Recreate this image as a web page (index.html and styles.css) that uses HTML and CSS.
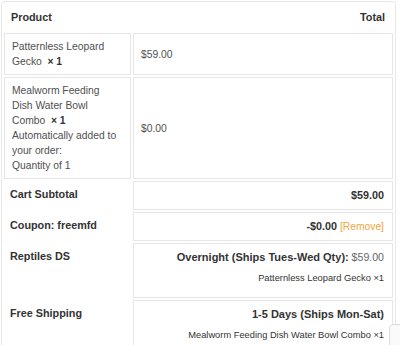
FILE: index.html
```html
<!DOCTYPE html>
<html lang="en">

<head>
    <meta charset="UTF-8">
    <meta name="viewport" content="width=device-width, initial-scale=1.0">
    <link rel="stylesheet" href="styles.css">
</head>

<body>
    <table class="order-review">
        <thead>
            <tr>
                <th class="product-name">Product</th>
                <th class="product-total">Total</th>
            </tr>
        </thead>
        <tbody>
            <tr class="cart-item">
                <td class="product-name">Patternless Leopard Gecko&nbsp;&nbsp;<strong class="qty">&times;&nbsp;1</strong></td>
                <td class="product-price">$59.00</td>
            </tr>
            <tr class="cart-item">
                <td class="product-name">Mealworm Feeding Dish Water Bowl Combo&nbsp;&nbsp;<strong class="qty">&times;&nbsp;1</strong><br>Automatically added to your order:<br>Quantity of 1</td>
                <td class="product-price">$0.00</td>
            </tr>
        </tbody>
        <tfoot>
            <tr>
                <th>Cart Subtotal</th>
                <td class="amount"><strong>$59.00</strong></td>
            </tr>
            <tr>
                <th>Coupon: freemfd</th>
                <td class="amount"><strong>-$0.00</strong> <a class="remove" href="#">[Remove]</a></td>
            </tr>
            <tr class="shipping">
                <th>Reptiles DS</th>
                <td class="amount">
                    <div class="method"><strong>Overnight (Ships Tues-Wed Qty):</strong> <span class="price">$59.00</span></div>
                    <p class="contents">Patternless Leopard Gecko &times;1</p>
                </td>
            </tr>
            <tr class="shipping">
                <th>Free Shipping</th>
                <td class="amount">
                    <div class="method"><strong>1-5 Days (Ships Mon-Sat)</strong></div>
                    <p class="contents">Mealworm Feeding Dish Water Bowl Combo &times;1</p>
                </td>
            </tr>
        </tfoot>
    </table>

    <div class="corner-widget"></div>
</body>

</html>
```

FILE: styles.css
```css
body {
    margin: 0;
    font-family: "Liberation Sans", Arial, sans-serif;
    font-size: 10.3px;
    line-height: 15px;
    color: #4f4f4f;
    background: #fff;
    overflow: hidden;
}

.order-review {
    margin: 1px 0 0 1px;
    width: 395px;
    table-layout: fixed;
    border-collapse: separate;
    border-spacing: 2px;
    border: 1px solid #e8e8e8;
    border-radius: 4px;
}

.order-review th,
.order-review td {
    padding: 5px 7px;
    text-align: left;
    vertical-align: top;
}

.order-review th {
    color: #333;
    font-weight: bold;
    font-size: 10.8px;
}

.order-review thead th {
    padding-top: 6px;
    padding-bottom: 6px;
}

.order-review thead th.product-name {
    width: 113px;
}

.order-review thead th.product-total {
    text-align: right;
    padding-right: 8px;
}

.order-review tbody td {
    border: 1px solid #e6e6e6;
}

.order-review tbody td.product-price {
    vertical-align: middle;
}

.qty {
    color: #333;
}

/*footer rows:*/
.order-review tfoot th {
    padding: 6px 7px 6px 6px;
}

.order-review tfoot td {
    border: 1px solid #e6e6e6;
    text-align: right;
    padding: 6px 8px 6px 7px;
}

.amount strong {
    color: #333;
    font-size: 10.8px;
}

.method strong {
    font-size: 11px;
}

.remove {
    color: #f5a33c;
    text-decoration: none;
}

.method .price {
    color: #666;
    font-size: 10.6px;
}

.contents {
    margin: 7px 0 6px;
    font-size: 9.3px;
    line-height: 13px;
    color: #333;
}

.corner-widget {
    position: fixed;
    left: 389px;
    top: 324px;
    width: 40px;
    height: 40px;
    border: 1px solid #dcdcdc;
    border-radius: 4px;
    background: #fafafa;
}
```
